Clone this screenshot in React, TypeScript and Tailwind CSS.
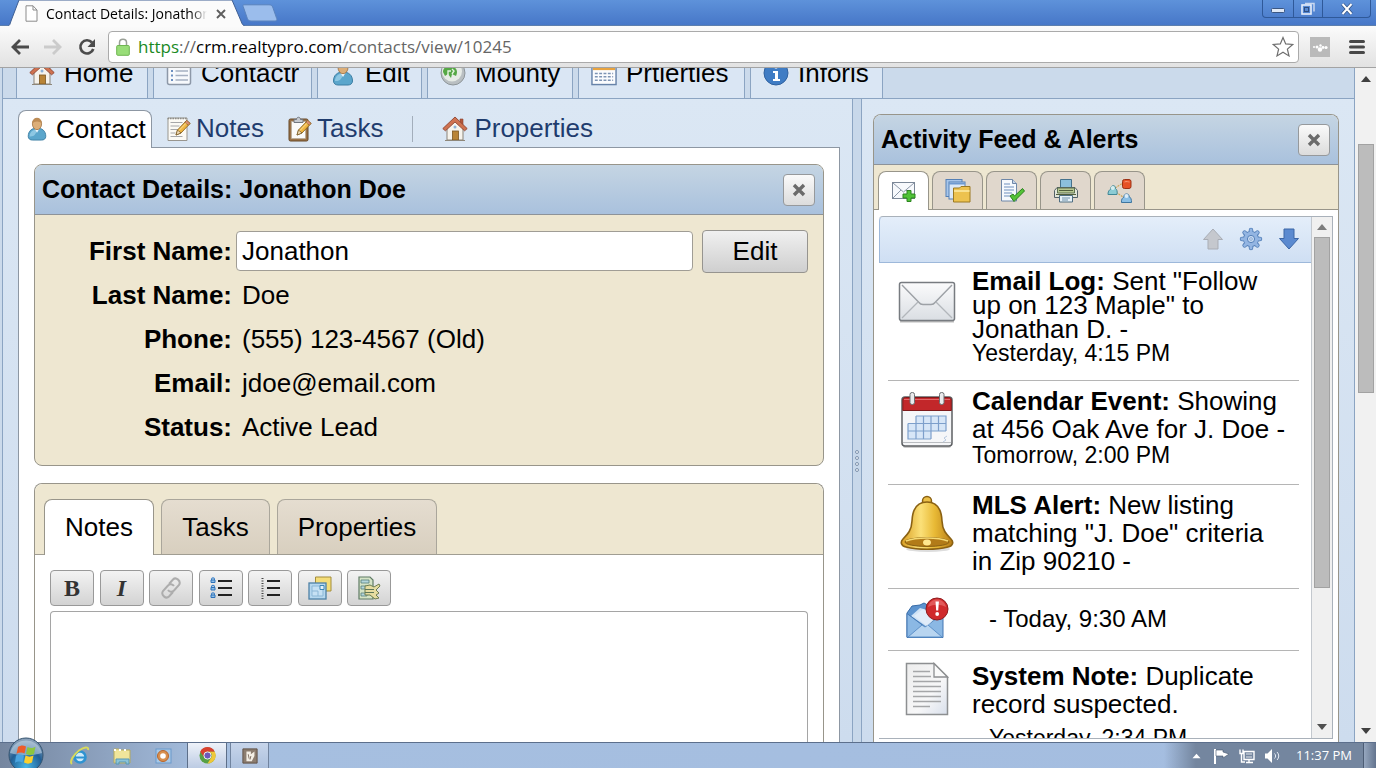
import React, { useState } from "react";
import clsx from "clsx";

interface IconProps {
  className?: string;
}

/* ---------- Icons ---------- */

const HouseIcon: React.FC<IconProps> = ({ className }) => (
  <svg viewBox="0 0 26 26" className={className} aria-hidden="true">
    <path d="M5 12v12h16V12l-8-8z" fill="#f6f3ec" stroke="#8b8378" />
    <path d="M18 3h3v6l-3-3z" fill="#b5583c" stroke="#8a4330" strokeWidth=".6" />
    <path d="M13 1 .8 12.6l2.6 2.2L13 6l9.600 8.800 2.600-2.200z" fill="#cf7250" stroke="#8f4632" strokeWidth=".9" />
    <rect x="10.500" y="15" width="6" height="9" fill="#b98436" stroke="#7b5622" strokeWidth=".8" />
    <circle cx="13" cy="11" r="1.500" fill="#8bb0d8" />
    <path d="M3 24.500h20" stroke="#8e8779" />
  </svg>
);

const PersonIcon: React.FC<IconProps> = ({ className }) => (
  <svg viewBox="0 0 22 26" className={className} aria-hidden="true">
    <path d="M1.500 21c0-6 4-9 9.500-9s9.500 3 9.500 9c0 2.500-2 4-4.500 4H6c-2.500 0-4.500-1.500-4.500-4z" fill="#5ba6cc" stroke="#3d7fa4" />
    <path d="M3 21c0-5 3.500-7.500 8-7.500-1 5-3 8-8 7.500z" fill="#a3d5ec" opacity=".7" />
    <path d="M8 12h6l-3 5z" fill="#eef6fb" />
    <ellipse cx="11" cy="7.500" rx="5" ry="6.200" fill="#dcae78" stroke="#9a6b3a" strokeWidth=".8" />
    <path d="M5.800 7c0-4 2-6 5.200-6s5.200 2 5.200 6c-2-3-8-3-10.400 0z" fill="#bd8c55" />
  </svg>
);

const ListIcon: React.FC<IconProps> = ({ className }) => (
  <svg viewBox="0 0 26 26" className={className} aria-hidden="true">
    <rect x="1.500" y="1.500" width="23" height="23" rx="2" fill="#f7f9fc" stroke="#8d98a8" strokeWidth="1.500" />
    <path d="M5 6.500h2M5 11h2M5 15.500h2M5 20h2" stroke="#6c8fc0" strokeWidth="2" />
    <path d="M9.500 6.500H22M9.500 11H22M9.500 15.500H22M9.500 20H22" stroke="#a5b0c1" strokeWidth="1.300" />
  </svg>
);

const GlobeIcon: React.FC<IconProps> = ({ className }) => (
  <svg viewBox="0 0 26 26" className={className} aria-hidden="true">
    <circle cx="13" cy="13" r="12" fill="#b9bfc2" stroke="#8d9599" />
    <circle cx="12" cy="11.500" r="10" fill="#e6ebe6" />
    <path d="M3 12c0-5 5-7 10-5 4 1 5 5 3 9l-4-2-1 4-3-4-3 2z" fill="#55a845" />
    <path d="M8 15v-4h3M12 9l2 2-2 3" fill="none" stroke="#e3f3dd" strokeWidth="1.400" />
  </svg>
);

const CalendarGridIcon: React.FC<IconProps> = ({ className }) => (
  <svg viewBox="0 0 27 26" className={className} aria-hidden="true">
    <rect x="1" y="1" width="25" height="24" fill="#fbfcfe" stroke="#6783a9" strokeWidth="1.500" />
    <rect x="2" y="5" width="23" height="5" fill="#e8a33f" />
    <path d="M4 13.500h19M4 17h19M4 20.500h19" stroke="#7d93b3" strokeWidth="1.600" strokeDasharray="3 1.500" />
  </svg>
);

const InfoIcon: React.FC<IconProps> = ({ className }) => (
  <svg viewBox="0 0 26 26" className={className} aria-hidden="true">
    <circle cx="13" cy="13" r="12" fill="#3f7cc4" stroke="#2f619f" />
    <circle cx="13" cy="6.500" r="2" fill="#fff" />
    <path d="M10 11h5v8h2v2h-7v-2h2v-6h-2z" fill="#fff" />
  </svg>
);

const Pencil = () => (
  <g>
    <path d="m9.500 19 1.500-5L20 4.500l3.500 3L14.500 17z" fill="#f0b640" stroke="#8a6423" strokeWidth=".9" />
    <path d="m18.300 6.200 3.500 3.100 1.900-2-3.500-3z" fill="#d98a70" stroke="#8a6423" strokeWidth=".7" />
    <path d="m9.500 19 1.500-5 3.500 3z" fill="#f3dfb9" stroke="#6d5020" strokeWidth=".7" />
    <path d="m12.500 14.500 7-7.200" stroke="#fae19b" strokeWidth="1" />
  </g>
);

const NoteIcon: React.FC<IconProps> = ({ className }) => (
  <svg viewBox="0 0 25 26" className={className} aria-hidden="true">
    <path d="M1.500 2h19v22.500h-19z" fill="#fbfaf5" stroke="#99968f" />
    <path d="M4 6.500h12M4 10h9M4 13.500h7M4 17h5M4 20.500h12" stroke="#a6a7a9" />
    <path d="M1 2.500h20" stroke="#8e8c88" strokeWidth="1.500" strokeDasharray="1.500 1" />
    <Pencil />
  </svg>
);

const TaskIcon: React.FC<IconProps> = ({ className }) => (
  <svg viewBox="0 0 25 26" className={className} aria-hidden="true">
    <rect x="1.500" y="3" width="19" height="22" rx="1.500" fill="#9a7248" stroke="#674827" />
    <rect x="4" y="5.500" width="14" height="17" fill="#fbfbfa" stroke="#b5aa9a" strokeWidth=".6" />
    <path d="M6.500 6.500v-3h2.500c0-3 4-3 4 0h2.500v3z" fill="#c6cad0" stroke="#72777e" />
    <Pencil />
  </svg>
);

const CloseIcon: React.FC<IconProps> = ({ className }) => (
  <svg viewBox="0 0 14 14" className={className} aria-hidden="true">
    <path d="m2 2 10 10M12 2 2 12" stroke="#6b6b6b" strokeWidth="3.400" />
  </svg>
);

const MailAddIcon = () => (
  <svg viewBox="0 0 26 26" className="size-[26px]" aria-hidden="true">
    <rect x="1.500" y="4.500" width="22" height="16" fill="#f7f9fc" stroke="#7b8797" />
    <path d="m2 5 10.500 9L23 5M2 20l8-8M23 20l-8-8" fill="none" stroke="#8b97a8" />
    <path d="M16 12.500h4v3.500h4v4h-4v3.500h-4V20h-4v-4h4z" fill="#4fc237" stroke="#2c8420" />
  </svg>
);

const FoldersIcon = () => (
  <svg viewBox="0 0 26 26" className="size-[26px]" aria-hidden="true">
    <rect x="1" y="1.500" width="16" height="17" fill="#a8c6ea" stroke="#5580b5" />
    <rect x="4" y="4" width="16" height="17" fill="#dce9f7" stroke="#5580b5" />
    <path d="M4 5.500h16" stroke="#6e9ad0" strokeWidth="2" />
    <path d="M8.500 10h6l1.500-1.500h9V24h-16.500z" fill="#edc24f" stroke="#9c7a22" />
    <path d="M9 12h15.500v2H9z" fill="#f9e190" />
  </svg>
);

const DocCheckIcon = () => (
  <svg viewBox="0 0 26 26" className="size-[26px]" aria-hidden="true">
    <path d="M2.500 1.500h11l4 4V23h-15z" fill="#f6f9fd" stroke="#6f87a8" />
    <path d="M13.500 1.500v4h4" fill="#c6d4e8" stroke="#6f87a8" />
    <path d="M5 6h6M5 9h10M5 12h10M5 15h8M5 18h6" stroke="#6e8fbd" />
    <path d="m11 18 3-2 1.500 2 8-7.500 2 2.500L15 23.500z" fill="#54c336" stroke="#2b7f1e" />
  </svg>
);

const PrinterIcon = () => (
  <svg viewBox="0 0 26 26" className="size-[26px]" aria-hidden="true">
    <path d="M7.500 1.500h11v8h-11z" fill="#8cc0dc" stroke="#45728c" />
    <path d="m4 9.500-2.500 3v7h23v-7l-2.500-3z" fill="#e2e6d9" stroke="#536067" />
    <path d="M4.500 10h17v5h-17z" fill="#b8c892" stroke="#5e7150" />
    <path d="M3 16.500h20M6 12.500h14" stroke="#53603d" strokeWidth="1.200" />
    <path d="M6.500 17.500h13V24h-13z" fill="#e7f1f8" stroke="#4f6e82" />
    <path d="M9 20h8M9 22h6" stroke="#6f90a8" />
  </svg>
);

const NetworkIcon = () => (
  <svg viewBox="0 0 26 26" className="size-[26px]" aria-hidden="true">
    <path d="m8 10 8-5M9 14l7 5" stroke="#cda75b" strokeWidth="1.200" strokeDasharray="2 1" />
    <rect x="15.500" y="1.500" width="8.500" height="9" rx="2" fill="#e65125" stroke="#9b3216" />
    <path d="M17.500 4c2-1 4 0 5 0" stroke="#f79b78" fill="none" />
    <path d="M1 16.500c0-4 2-5 3-5.500-1-4 5-4.500 4.500-.500 1.500 1 2 3 1.500 6z" fill="#8bcbd4" stroke="#3f8796" />
    <circle cx="5.800" cy="10" r="2" fill="#d7eef0" />
    <path d="M14.500 24.500c-.5-3.500 1.500-5 2.500-5.500-.5-4 5.500-4 5-.5 2 1 2.500 3 2.500 6z" fill="#8bbfe5" stroke="#3e759f" />
    <circle cx="19.500" cy="18" r="2" fill="#dcecf7" />
  </svg>
);

const ArrowIcon: React.FC<{ dir: "up" | "down" }> = ({ dir }) => (
  <svg viewBox="0 0 22 22" className={clsx("size-[22px]", dir === "down" && "rotate-180")} aria-hidden="true">
    <path
      d="M11 1 1.500 11.500H6V21h10v-9.500h4.500z"
      fill={dir === "up" ? "#c5c8ce" : "#5b8ad0"}
      stroke={dir === "up" ? "#a9adb5" : "#3c66a6"}
      strokeLinejoin="round"
    />
  </svg>
);

const GearIcon = () => (
  <svg viewBox="0 0 24 24" className="size-6" aria-hidden="true">
    <g stroke="#5580b9" strokeWidth="4.500" strokeLinecap="round">
      <path d="M12 3v18M3 12h18M5.600 5.600l12.800 12.800M18.400 5.600 5.600 18.400" />
    </g>
    <circle cx="12" cy="12" r="8" fill="#5580b9" />
    <g stroke="#93b5e2" strokeWidth="2.800" strokeLinecap="round">
      <path d="M12 3v18M3 12h18M5.600 5.600l12.800 12.800M18.400 5.600 5.600 18.400" />
    </g>
    <circle cx="12" cy="12" r="7.200" fill="#93b5e2" />
    <circle cx="12" cy="12" r="3.600" fill="#c9dcf3" stroke="#5580b9" />
    <circle cx="12" cy="12" r="1.300" fill="#e8f1fb" stroke="#5580b9" strokeWidth=".6" />
  </svg>
);

const EnvelopeIcon = () => (
  <svg viewBox="0 0 58 42" className="h-[42px] w-[58px]" aria-hidden="true">
    <defs>
      <linearGradient id="env" x1="0" y1="0" x2="0" y2="1">
        <stop offset="0" stopColor="#fbfbfc" />
        <stop offset="1" stopColor="#dadee3" />
      </linearGradient>
    </defs>
    <path d="M2 40.500h54" stroke="#bbb" strokeWidth="2" />
    <rect x="1.500" y="1.500" width="55" height="38" rx="2" fill="url(#env)" stroke="#777b80" strokeWidth="1.500" />
    <path d="m4 4 17 17.500c1 1.500 2 2 4 2h8c2 0 3-.5 4-2L54 4" fill="none" stroke="#9da1a6" strokeWidth="1.400" />
    <path d="m4 37 16-16M54 37 38 21" stroke="#b2b6bb" strokeWidth="1.300" />
  </svg>
);

const CalendarIcon = () => (
  <svg viewBox="0 0 54 58" className="h-[58px] w-[54px]" aria-hidden="true">
    <rect x="3" y="53" width="48" height="4" rx="2" fill="#ccc" />
    <rect x="2" y="6" width="50" height="49" rx="3" fill="#f5f6f8" stroke="#5d6063" strokeWidth="1.500" />
    <path d="M2.800 19.500V9c0-1.500 1-2.500 2.500-2.500h43.500c1.500 0 2.500 1 2.500 2.500v10.500z" fill="#c2272a" stroke="#7e1a1b" />
    <path d="M4 8.500h46" stroke="#e3696a" />
    <path d="M3 51.500h48" stroke="#b9bcc0" />
    <path d="M16 25h30v15H31v8H8V32.500h8z" fill="#d7e6f7" />
    <path d="M16 25h30v15M16 25v23M23.500 25v23M31 25v23M38.500 25v15M46 25v15M8 32.500h38M8 40h38M8 32.500V48h23" fill="none" stroke="#7d9fcb" strokeWidth="1.200" />
    <path d="m47 45-3 2 2 2-3 2" fill="none" stroke="#b9c9df" />
    <rect x="10" y="1.500" width="4.500" height="12" rx="2" fill="#e9eaec" stroke="#6c6f72" />
    <rect x="39.500" y="1.500" width="4.500" height="12" rx="2" fill="#e9eaec" stroke="#6c6f72" />
  </svg>
);

const BellIcon = () => (
  <svg viewBox="0 0 56 60" className="h-[60px] w-14" aria-hidden="true">
    <defs>
      <linearGradient id="bell" x1="0" y1="0" x2="1" y2="0">
        <stop offset="0" stopColor="#d99f24" />
        <stop offset=".38" stopColor="#fbe078" />
        <stop offset=".65" stopColor="#e8b935" />
        <stop offset="1" stopColor="#b77c17" />
      </linearGradient>
    </defs>
    <ellipse cx="29" cy="55" rx="22" ry="3" fill="#ddd" />
    <circle cx="28" cy="7" r="4.500" fill="#ecc048" stroke="#8a6113" strokeWidth="1.500" />
    <path d="M28 8c-11 0-14.500 8-15 19-.4 9-4 13-9 18-3 3-2 7 3 8 12 3 30 3 42 0 5-1 6-5 3-8-5-5-8.600-9-9-18C42.500 16 39 8 28 8z" fill="url(#bell)" stroke="#8a6113" strokeWidth="1.600" />
    <ellipse cx="28" cy="48" rx="22" ry="4.500" fill="#b27b18" stroke="#8a6113" />
    <path d="M7 47c10-4 32-4 42 0" fill="none" stroke="#f5d973" strokeWidth="1.500" />
    <ellipse cx="28" cy="48.500" rx="4" ry="3" fill="#ffe78f" />
  </svg>
);

const MailAlertIcon = () => (
  <svg viewBox="0 0 44 42" className="h-[42px] w-11" aria-hidden="true">
    <path d="M2 16 7 9l8-1 4-2 18 10v24H2z" fill="#5d94cf" stroke="#376ba8" />
    <path d="m6 19 9-8 18 5-11 14z" fill="#cfe2f5" />
    <path d="M2 16.500 20 30l18-13.500V40.500H2z" fill="#8bb8e4" stroke="#4377b3" />
    <path d="m3 40 14-12 3 2 3-2 14 12z" fill="#b8d5f0" stroke="#5f92ca" />
    <path d="m9 19 9-7 8 4 4 6-8 7z" fill="#e3effa" opacity=".8" />
    <circle cx="32" cy="12" r="11" fill="#d02a2c" stroke="#8f1c1e" />
    <path d="M23 10c2-10 16-10 18 0-6-3-12-3-18 0z" fill="#ef7a78" opacity=".6" />
    <path d="M30.500 4.500h3.400l-.7 9h-2z" fill="#fff" />
    <circle cx="32.200" cy="17" r="1.900" fill="#fff" />
  </svg>
);

const DocumentIcon = () => (
  <svg viewBox="0 0 44 54" className="h-[54px] w-11" aria-hidden="true">
    <defs>
      <linearGradient id="doc" x1="0" y1="0" x2="1" y2="1">
        <stop offset="0" stopColor="#ededed" />
        <stop offset=".6" stopColor="#f7f7f8" />
        <stop offset="1" stopColor="#d8dfeb" />
      </linearGradient>
    </defs>
    <path d="M1.500 1.500H29l13.500 13.500v37.500h-41z" fill="url(#doc)" stroke="#8d8f91" strokeWidth="1.500" />
    <path d="M29 1.500V15h13.500z" fill="#fafafa" stroke="#8d8f91" strokeWidth="1.300" />
    <path d="M8 9.500h17M8 14.500h18M8 19.500h28M8 24.500h28M8 29.500h28M8 34.500h28M8 39.500h28M8 44.500h17" stroke="#a5a6a8" strokeWidth="1.500" />
  </svg>
);

/* ---------- Shared pieces ---------- */

const CloseButton: React.FC<{ label: string }> = ({ label }) => (
  <button
    type="button"
    aria-label={label}
    className="flex size-8 shrink-0 items-center justify-center rounded border border-[#96999c] bg-linear-to-b from-[#fafafa] to-[#dcdcdc]"
  >
    <CloseIcon className="size-[14px]" />
  </button>
);

const PanelHeader: React.FC<{ title: string; closeLabel: string }> = ({ title, closeLabel }) => (
  <div className="flex h-[50px] shrink-0 items-center justify-between border-b border-[#8d9399] bg-linear-to-b from-[#c5d5e3] to-[#a9c1dd] pr-2 pl-[7px]">
    <h2 className="text-[25px] font-bold">{title}</h2>
    <CloseButton label={closeLabel} />
  </div>
);

/* ---------- Browser chrome ---------- */

const TitleBar = () => (
  <header className="flex h-[26px] shrink-0 justify-between border-b border-[#5d7fae] bg-linear-to-b from-[#5e92da] to-[#4777c8] pl-2">
    <div className="flex">
      <div className="relative flex h-[27px] w-[238px] items-center pl-[17px] text-sm">
        <svg viewBox="0 0 238 27" preserveAspectRatio="none" className="absolute inset-0 size-full" aria-hidden="true">
          <path d="M-2 27c4-1 4-3 5-6L11 0h213l9 21c1 3 2 5 6 6z" fill="#fbfbfb" stroke="#3f5f93" />
          <path d="M-3 27h244" stroke="#fbfbfb" strokeWidth="2" />
        </svg>
        <svg viewBox="0 0 13 17" className="relative h-[17px] w-[13px]" aria-hidden="true">
          <path d="M1 .8h7l4 4.200v11.200H1z" fill="#fff" stroke="#8b8b8b" />
          <path d="M8 .8V5h4" fill="none" stroke="#8b8b8b" />
        </svg>
        <span className="relative ml-2 w-[161px] overflow-hidden mask-r-from-90% font-['Open_Sans','Noto_Sans',sans-serif] whitespace-nowrap">
          Contact Details: Jonathon
        </span>
        <button type="button" aria-label="Close tab" className="relative ml-[9px]">
          <svg viewBox="0 0 10 10" className="size-[10px]" aria-hidden="true">
            <path d="m1 1 8 8M9 1 1 9" stroke="#5e5e5e" strokeWidth="1.900" />
          </svg>
        </button>
      </div>
      <button type="button" aria-label="New tab" className="-ml-1 self-start pt-1">
        <svg viewBox="0 0 36 18" className="h-[18px] w-9" aria-hidden="true">
          <path d="M2 .8h25c2 0 3 .7 3.700 2.200l4 11.500c.5 1.500 0 2.500-1.700 2.500H9c-2 0-3-1-3.700-2.700L1.200 2.500C.8 1.300 1 .8 2 .8z" fill="#9bbdec" stroke="#5a83bd" />
        </svg>
      </button>
    </div>
    <div className="mr-[5px] flex h-[18px] rounded-b border border-t-0 border-[#2f5999]">
      <button type="button" aria-label="Minimize" className="flex w-[30px] items-center justify-center">
        <svg viewBox="0 0 14 5" className="mt-1 h-[5px] w-[14px]" aria-hidden="true">
          <rect x=".5" y=".5" width="13" height="4" rx="1" fill="#dfe9f7" stroke="#3b5783" />
        </svg>
      </button>
      <button type="button" aria-label="Restore" className="flex w-[30px] items-center justify-center border-x border-[#2f5999]">
        <svg viewBox="0 0 16 14" className="h-[14px] w-4" aria-hidden="true">
          <path d="M5 1.500h9v8" fill="none" stroke="#c9d8f0" strokeWidth="1.500" />
          <rect x="2" y="3" width="9" height="9" fill="none" stroke="#e8effa" strokeWidth="1.600" />
          <rect x="4.500" y="5.500" width="4" height="4" fill="none" stroke="#2f4f80" />
        </svg>
      </button>
      <button type="button" aria-label="Close window" className="flex w-[47px] items-center justify-center">
        <svg viewBox="0 0 12 12" className="size-3" aria-hidden="true">
          <path d="m1.500 1 9 10M10.500 1l-9 10" stroke="#2f4f80" strokeWidth="3.400" />
          <path d="m1.500 1 9 10M10.500 1l-9 10" stroke="#fff" strokeWidth="2" />
        </svg>
      </button>
    </div>
  </header>
);

const AddressBar = () => (
  <div className="flex h-[42px] shrink-0 items-center border-b border-[#a3a3a3] bg-linear-to-b from-[#fbfbfb] to-[#e2e2e2] pr-[11px] pl-[11px]">
    <button type="button" aria-label="Back">
      <svg viewBox="0 0 18 16" className="h-4 w-[18px]" aria-hidden="true">
        <path d="M18 8H3M9 1 2 8l7 7" fill="none" stroke="#4b4b4b" strokeWidth="2.800" />
      </svg>
    </button>
    <button type="button" aria-label="Forward" className="ml-[15px]">
      <svg viewBox="0 0 18 16" className="h-4 w-[18px]" aria-hidden="true">
        <path d="M0 8h15M9 1l7 7-7 7" fill="none" stroke="#cbcbcb" strokeWidth="2.800" />
      </svg>
    </button>
    <button type="button" aria-label="Reload" className="ml-4">
      <svg viewBox="0 0 18 18" className="size-[18px]" aria-hidden="true">
        <path d="M14 4.500A6.600 6.600 0 1 0 15.300 11" fill="none" stroke="#4b4b4b" strokeWidth="2.700" />
        <path d="M17 1v8H9.500z" fill="#4b4b4b" />
      </svg>
    </button>
    <div className="ml-3 flex h-8 flex-1 items-center rounded border border-[#aaa] bg-white pr-1 pl-[7px]">
      <svg viewBox="0 0 14 18" className="h-[18px] w-[14px]" aria-hidden="true">
        <path d="M3.500 9V4.500C3.500 0 10.500 0 10.500 4.500V9" fill="none" stroke="#9aa097" strokeWidth="1.500" />
        <rect x=".7" y="7.500" width="12.600" height="9.800" rx="1" fill="#98dd78" stroke="#6fb552" />
      </svg>
      <p className="ml-2 flex-1 font-['Open_Sans','Noto_Sans',sans-serif] text-[17px] whitespace-nowrap text-[#666]">
        <span className="text-[#1a8a1f]">https</span>://<span className="text-black">crm.realtypro.com</span>
        /contacts/view/10245
      </p>
      <button type="button" aria-label="Bookmark this page">
        <svg viewBox="0 0 22 21" className="h-[21px] w-[22px]" aria-hidden="true">
          <path d="m11 1.500 2.700 6.400 7 .6-5.300 4.600 1.600 6.800-6-3.600-6 3.600 1.600-6.800L1.300 8.500l7-.6z" fill="#fff" stroke="#6e6e6e" strokeWidth="1.200" />
        </svg>
      </button>
    </div>
    <button type="button" aria-label="Extension" className="ml-[11px]">
      <svg viewBox="0 0 20 20" className="size-5" aria-hidden="true">
        <path d="M0 0h20v20H0z" fill="#bababa" />
        <g fill="#fff">
          <circle cx="4" cy="10" r="1" />
          <circle cx="7" cy="10" r="1.500" />
          <circle cx="10" cy="12.500" r="2.200" />
          <circle cx="10.500" cy="8.500" r="1.200" />
          <circle cx="13" cy="10.500" r="1.400" />
          <circle cx="16" cy="10.500" r="1.600" />
        </g>
      </svg>
    </button>
    <button type="button" aria-label="Menu" className="ml-[19px]">
      <svg viewBox="0 0 16 16" className="size-4" aria-hidden="true">
        <path d="M1.500 2.500h13M1.500 8h13M1.500 13.500h13" stroke="#474747" strokeWidth="3" strokeLinecap="round" />
      </svg>
    </button>
  </div>
);

/* ---------- Site navigation ---------- */

const navItems = [
  { label: "Home", icon: HouseIcon, width: "w-[132px]" },
  { label: "Contactr", icon: ListIcon, width: "w-[159px]" },
  { label: "Edit", icon: PersonIcon, width: "w-[105px]" },
  { label: "Mounty", icon: GlobeIcon, width: "w-[146px]" },
  { label: "Prtierties", icon: CalendarGridIcon, width: "w-[167px]" },
  { label: "Inforis", icon: InfoIcon, width: "w-[133px]" },
];

const MainNav = () => (
  <nav className="flex h-[31px] shrink-0 items-end gap-[5px] overflow-hidden border-b border-[#8ba4c2] bg-[#cbdaeb] pl-[13px]">
    {navItems.map(({ label, icon: Icon, width }) => {
      const active = label.startsWith("Prt");
      return (
        <a
          key={label}
          href="#"
          className={clsx(
            "flex h-[50px] shrink-0 items-center gap-[9px] border-x border-[#8ba4c2] bg-[#dae6f4] pl-3 text-[26px] leading-[50px]",
            width,
            active && "relative z-10 -mb-px h-[51px] pb-px",
          )}
        >
          <Icon className="size-[26px]" />
          {label}
        </a>
      );
    })}
  </nav>
);

const SubTabs = () => (
  <div className="flex h-[38px] items-center border-b border-[#8d97a3] text-[26px] text-[#1f3c6e]">
    <button
      type="button"
      className="-mb-px flex h-[39px] w-[134px] items-center gap-2 self-start rounded-t-lg border border-b-0 border-[#8d97a3] bg-white pb-[2px] pl-[7px] text-black"
    >
      <PersonIcon className="h-6 w-[22px]" />
      Contact
    </button>
    <button type="button" className="ml-[14px] flex items-center gap-1">
      <NoteIcon className="size-[26px]" />
      Notes
    </button>
    <button type="button" className="ml-[23px] flex items-center gap-1">
      <TaskIcon className="size-[26px]" />
      Tasks
    </button>
    <span className="ml-[29px] h-[26px] w-px bg-[#a3aebb]" />
    <button type="button" className="ml-[29px] flex items-center gap-[6px]">
      <HouseIcon className="size-[26px]" />
      Properties
    </button>
  </div>
);

/* ---------- Contact details ---------- */

const details = [
  { label: "Last Name:", value: "Doe" },
  { label: "Phone:", value: "(555) 123-4567 (Old)" },
  { label: "Email:", value: "jdoe@email.com" },
  { label: "Status:", value: "Active Lead" },
];

const ContactCard = () => {
  const [firstName, setFirstName] = useState("Jonathon");

  return (
    <section className="overflow-hidden rounded-lg border border-[#98958a] bg-[#eee7d1]">
      <PanelHeader title="Contact Details: Jonathon Doe" closeLabel="Close contact details" />
      <div className="pt-[14px] pr-[15px] pb-4 text-[26px]">
        <div className="flex h-11 items-center">
          <label htmlFor="first-name" className="w-[197px] shrink-0 text-right font-bold">
            First Name:
          </label>
          <input
            id="first-name"
            type="text"
            value={firstName}
            onChange={(e) => setFirstName(e.target.value)}
            className="ml-1 h-10 min-w-0 flex-1 rounded border border-[#a09d95] bg-white px-[5px]"
          />
          <button
            type="button"
            className="ml-[9px] h-[43px] w-[106px] rounded border border-[#96948f] bg-linear-to-b from-[#f0f0f0] to-[#cfcfcf]"
          >
            Edit
          </button>
        </div>
        <dl>
          {details.map((d) => (
            <div key={d.label} className="flex h-11 items-center">
              <dt className="w-[197px] shrink-0 text-right font-bold">{d.label}</dt>
              <dd className="ml-[10px]">{d.value}</dd>
            </div>
          ))}
        </dl>
      </div>
    </section>
  );
};

/* ---------- Notes editor ---------- */

const editorTools = [
  {
    label: "Bold",
    icon: <span className="font-['Liberation_Serif',serif] text-2xl font-bold text-[#333]">B</span>,
  },
  {
    label: "Italic",
    icon: <span className="font-['Liberation_Serif',serif] text-2xl font-bold text-[#333] italic">I</span>,
  },
  {
    label: "Insert link",
    icon: (
      <svg viewBox="0 0 22 22" className="size-[22px]" fill="none" stroke="#adadad" strokeWidth="2" aria-hidden="true">
        <path d="m9 7 4-4.500c3-3 8.500 1.500 6 5.500l-5 5.500c-2 2-4.500 1.500-6-.5" />
        <path d="m13 15-4 4.500c-3 3-8.500-1.500-6-5.500l5-5.500c2-2 4.500-1.500 6 .5" />
      </svg>
    ),
  },
  {
    label: "Bulleted list",
    icon: (
      <svg viewBox="0 0 24 24" className="size-6" fill="none" aria-hidden="true">
        <path d="M9 5h14M9 12h14M9 19h14" stroke="#222" strokeWidth="1.800" />
        <path d="M2.500 4c0-3 3-3 3 0M2.500 11.500c0-3 3-3 3 0M2.500 19c0-3 3-3 3 0" stroke="#3a80c8" strokeWidth="1.200" />
        <path d="M2 4h4v2.500H2zM2 11.500h4V14H2zM2 19h4v2.500H2z" fill="#8dbdea" stroke="#2d72b8" />
      </svg>
    ),
  },
  {
    label: "Numbered list",
    icon: (
      <svg viewBox="0 0 24 24" className="size-6" fill="none" aria-hidden="true">
        <path d="M9 5h13M9 12h13M9 19h13" stroke="#222" strokeWidth="1.800" />
        <path d="M4.500 2v21" stroke="#444" strokeWidth="2" strokeDasharray="1 1.500" />
      </svg>
    ),
  },
  {
    label: "Insert image",
    icon: (
      <svg viewBox="0 0 24 24" className="size-6" aria-hidden="true">
        <path d="M7.500 1h15.500v14H7.500z" fill="#f4dd79" stroke="#a38d3b" />
        <rect x="1" y="7" width="17" height="16" fill="#b6d8ef" stroke="#4e81a6" strokeWidth="1.300" />
        <path d="M4 10h11v10H4zM4 15h6v5" fill="#c6e1f4" stroke="#8bb7d6" />
        <path d="M12 9.500h4v4h-4z" fill="#e3f1fa" stroke="#3c86b6" />
      </svg>
    ),
  },
  {
    label: "Edit source",
    icon: (
      <svg viewBox="0 0 24 24" className="size-6" aria-hidden="true">
        <path d="M2 1h11l3 3v19H2z" fill="#d5e3c6" stroke="#5f7b65" strokeWidth="1.200" />
        <path d="M4 4h8v3H4zM4 10h5v3H4zM4 17h6v3H4z" fill="#b4d6dc" stroke="#577f79" strokeWidth=".8" />
        <path d="m8 10 5-1 4 2 5-3 1 2-4 4 3 3-3 2 3 3-4 1-5-4H8z" fill="#e6dca0" stroke="#6c7d50" />
        <path d="M8 13.500h9M8 16.500h9" stroke="#5d7658" />
      </svg>
    ),
  },
];

const editorTabs = [
  { label: "Notes", width: "w-[110px]" },
  { label: "Tasks", width: "w-[109px]" },
  { label: "Properties", width: "w-[160px]" },
];

const EditorCard = () => {
  const [activeTab, setActiveTab] = useState("Notes");

  return (
    <section className="mt-[17px] flex min-h-0 flex-1 flex-col rounded-t-lg border border-b-0 border-[#98958a]">
      <div className="flex h-[71px] shrink-0 items-end gap-[7px] rounded-t-lg border-b border-[#a09d92] bg-[#eee7d1] pl-[9px]">
        {editorTabs.map(({ label, width }) => (
          <button
            key={label}
            type="button"
            onClick={() => setActiveTab(label)}
            className={clsx(
              "rounded-t-lg border border-b-0 text-[26px]",
              width,
              activeTab === label
                ? "-mb-px h-14 border-[#98958a] bg-white pb-px"
                : "h-[55px] border-[#aaa69b] bg-linear-to-b from-[#e5ddd0] to-[#d8cfbf]",
            )}
          >
            {label}
          </button>
        ))}
      </div>
      <div className="flex min-h-0 flex-1 flex-col px-[15px] pt-[15px]">
        <div className="flex w-[341px] shrink-0 justify-between">
          {editorTools.map((tool) => (
            <button
              key={tool.label}
              type="button"
              aria-label={tool.label}
              className="flex h-9 w-11 items-center justify-center rounded border border-[#999] bg-linear-to-b from-[#f3f3f3] to-[#d3d3d3]"
            >
              {tool.icon}
            </button>
          ))}
        </div>
        <textarea
          aria-label="Note text"
          className="mt-[5px] w-full flex-1 resize-none rounded-t border border-b-0 border-[#a5a5a5] bg-white p-2 text-[26px]"
        />
      </div>
    </section>
  );
};

/* ---------- Activity feed ---------- */

const feedTabs = [
  { label: "Email", icon: <MailAddIcon /> },
  { label: "Folders", icon: <FoldersIcon /> },
  { label: "Documents", icon: <DocCheckIcon /> },
  { label: "Print", icon: <PrinterIcon /> },
  { label: "Network", icon: <NetworkIcon /> },
];

interface FeedItemProps {
  icon: React.ReactNode;
  className?: string;
  children: React.ReactNode;
}

const FeedItem: React.FC<FeedItemProps> = ({ icon, className, children }) => (
  <li className={clsx("flex border-b border-[#b5b5b5] text-[26px]", className)}>
    <div className="flex w-[78px] shrink-0 justify-center self-start">{icon}</div>
    <div className="min-w-0 flex-1 pr-3 pl-[6px]">{children}</div>
  </li>
);

const ActivityFeed = () => {
  const [activeTab, setActiveTab] = useState("Email");

  return (
    <section className="flex h-full flex-col overflow-hidden rounded-t-lg border border-b-0 border-[#98958a] bg-white">
      <PanelHeader title="Activity Feed & Alerts" closeLabel="Close activity feed" />
      <div className="flex h-[45px] shrink-0 items-end gap-[3px] border-b border-[#98958a] bg-[#eee7d1] pl-1">
        {feedTabs.map(({ label, icon }) => (
          <button
            key={label}
            type="button"
            aria-label={label}
            onClick={() => setActiveTab(label)}
            className={clsx(
              "flex w-[51px] items-center justify-center rounded-t-lg border border-b-0 border-[#98958a]",
              activeTab === label ? "-mb-px h-[39px] bg-white" : "h-[38px] bg-[#e0d7cc]",
            )}
          >
            {icon}
          </button>
        ))}
      </div>
      <div className="mx-[5px] mt-[6px] mb-[3px] flex min-h-0 flex-1 rounded-tl border-t border-r border-b border-[#a9b1ba]">
        <div className="flex min-w-0 flex-1 flex-col overflow-hidden">
          <div className="flex h-[46px] shrink-0 items-center justify-end gap-[15px] rounded-tl border-b border-l border-[#9db8da] bg-linear-to-b from-[#e4eefa] to-[#cfdff3] pr-[11px] pb-px">
            <button type="button" aria-label="Move up">
              <ArrowIcon dir="up" />
            </button>
            <button type="button" aria-label="Feed settings">
              <GearIcon />
            </button>
            <button type="button" aria-label="Move down">
              <ArrowIcon dir="down" />
            </button>
          </div>
          <ul className="min-h-0 flex-1 overflow-hidden pr-3 pl-[9px]">
            <FeedItem icon={<div className="pt-3"><EnvelopeIcon /></div>} className="pt-[6px] pb-[15px] leading-6">
              <p>
                <b>Email Log:</b> Sent "Follow up on 123 Maple" to Jonathan D. -
              </p>
              <p className="text-[23px] leading-6">Yesterday, 4:15 PM</p>
            </FeedItem>
            <FeedItem icon={<div className="pt-1"><CalendarIcon /></div>} className="pt-[6px] pb-[17px] leading-7">
              <p>
                <b>Calendar Event:</b> Showing at 456 Oak Ave for J. Doe -
              </p>
              <p className="text-[23px] leading-6">Tomorrow, 2:00 PM</p>
            </FeedItem>
            <FeedItem icon={<div className="pt-[3px]"><BellIcon /></div>} className="pt-[6px] pb-[13px] leading-7">
              <p>
                <b>MLS Alert:</b> New listing matching "J. Doe" criteria in Zip 90210 -
              </p>
            </FeedItem>
            <FeedItem icon={<MailAlertIcon />} className="pt-2 pb-[11px] leading-7">
              <p className="pt-2 pl-[17px] text-2xl leading-7">- Today, 9:30 AM</p>
            </FeedItem>
            <FeedItem icon={<DocumentIcon />} className="pt-[11px] leading-7">
              <p>
                <b>System Note:</b> Duplicate record suspected.
              </p>
              <p className="pt-[6px] pl-[17px] text-[23px] leading-7">Yesterday, 2:34 PM</p>
            </FeedItem>
          </ul>
        </div>
        <div className="flex w-[21px] shrink-0 flex-col items-center border-l border-[#c3c8ce] bg-[#f0f0f0]">
          <svg viewBox="0 0 10 6" className="my-[7px] h-[6px] w-[10px]" aria-hidden="true">
            <path d="m5 0 5 6H0z" fill="#7c7c7c" />
          </svg>
          <div className="h-[351px] w-4 border border-[#a2a2a2] bg-[#bcbcbc]" />
          <svg viewBox="0 0 10 6" className="mt-auto mb-2 h-[6px] w-[10px]" aria-hidden="true">
            <path d="m5 6 5-6H0z" fill="#505050" />
          </svg>
        </div>
      </div>
    </section>
  );
};

/* ---------- Taskbar ---------- */

const Taskbar = () => (
  <footer className="relative flex h-[26px] shrink-0 items-center border-t border-[#5c6f8c] bg-linear-to-r from-[#75869f] via-[#a6bfe0] via-15% to-[#a4bde0]">
    <button type="button" aria-label="Start" className="-mt-2 ml-2 h-[34px] w-9 overflow-hidden">
      <svg viewBox="0 0 36 34" className="h-[34px] w-9" aria-hidden="true">
        <defs>
          <radialGradient id="orb" cx=".5" cy=".85" r=".8">
            <stop offset="0" stopColor="#45b7e8" />
            <stop offset=".6" stopColor="#215f96" />
            <stop offset="1" stopColor="#8aa1b9" />
          </radialGradient>
        </defs>
        <circle cx="18" cy="20" r="17" fill="url(#orb)" stroke="#34536f" />
        <path d="M2 18a16.500 16.500 0 0 1 32 0c-10 3-22 3-32 0z" fill="#d9e6ef" opacity=".5" />
        <path d="M10 12c3-2 5-2 8-.5l-1.500 7c-3-1.500-5.500-1-8 .3z" fill="#ee5b28" />
        <path d="M19.500 12c3 1.500 5 1.500 8-.3L26 19c-3 1.500-5 1.500-8 0z" fill="#8cc63f" />
        <path d="M8 20.500c3-1.500 5-1.500 8 0l-1.500 7c-3-1.500-5-1-7.500.3z" fill="#4aa4e0" />
        <path d="M17.500 20.500c3 1.500 5 1.500 8 0l-1.500 7c-3 1.500-5 1.500-8 0z" fill="#fbd02e" />
      </svg>
    </button>
    <button type="button" aria-label="Internet Explorer" className="ml-[25px]">
      <svg viewBox="0 0 22 22" className="size-[22px]" aria-hidden="true">
        <circle cx="11" cy="12" r="5.500" fill="#cdeafa" stroke="#2f93d1" strokeWidth="2.600" />
        <path d="M6 12.500h10" stroke="#2f93d1" strokeWidth="2" />
        <path d="M3 19C0 17 5 9 10 5.500 15 2 20 1 19 5" fill="none" stroke="#d8d95c" strokeWidth="2" />
      </svg>
    </button>
    <button type="button" aria-label="File Explorer" className="ml-5">
      <svg viewBox="0 0 22 20" className="h-5 w-[22px]" aria-hidden="true">
        <path d="M3 3h5l1 1h10v13H3z" fill="#f0e59b" stroke="#b4a95f" />
        <path d="M4 3v2M9 3v2M14 3v2" stroke="#fff" strokeWidth="2" />
        <path d="M5 18v-5h13v5h-3v-2H8v2z" fill="#8bc4d9" stroke="#5897b3" />
      </svg>
    </button>
    <button type="button" aria-label="Media Player" className="ml-5">
      <svg viewBox="0 0 20 18" className="h-[18px] w-5" aria-hidden="true">
        <rect x="3" y="2" width="15" height="14" fill="#a9c8e6" stroke="#6a9acb" />
        <circle cx="10" cy="9" r="5.500" fill="#d8904f" stroke="#b9652b" />
        <circle cx="10" cy="9" r="2.800" fill="#fff" />
      </svg>
    </button>
    <button
      type="button"
      aria-label="Chrome"
      className="ml-[14px] flex h-full w-10 items-center justify-center border-x border-[#5d6f89] bg-linear-to-b from-[#eef2f9] to-[#bccbe3]"
    >
      <svg viewBox="0 0 18 18" className="size-[17px]" aria-hidden="true">
        <circle cx="9" cy="9" r="8.500" fill="#57a044" />
        <path d="M1.300 5A8.500 8.500 0 0 1 16.700 5H9a4 4 0 0 0-3.500 6z" fill="#d8412f" />
        <path d="M16.700 5A8.500 8.500 0 0 1 9 17.500l4-6.500A4 4 0 0 0 9 5z" fill="#f0c739" />
        <circle cx="9" cy="9" r="3.800" fill="#6c58b9" stroke="#f5f5f5" />
      </svg>
    </button>
    <button
      type="button"
      aria-label="Paint"
      className="ml-[3px] flex h-full w-[39px] items-center justify-center border-x border-[#71849f] bg-linear-to-b from-[#c7d5ea] to-[#adc1de]"
    >
      <svg viewBox="0 0 18 18" className="size-4" aria-hidden="true">
        <path d="M1 1h16v16H1z" fill="#8c7d70" stroke="#5b4b40" />
        <path d="M5 4h5v3l4-3v5l-3 6H5z" fill="#f4efe6" />
        <path d="m7 7 1 5M10 9l-1 4" stroke="#79685b" />
      </svg>
    </button>
    <div className="ml-auto flex h-full items-center bg-linear-to-r from-transparent to-[#74869f] to-15% pl-7 text-white">
      <button type="button" aria-label="Show hidden icons">
        <svg viewBox="0 0 10 6" className="h-[6px] w-[9px]" aria-hidden="true">
          <path d="m5 .5 4.500 5H.5z" fill="#fff" />
        </svg>
      </button>
      <svg viewBox="0 0 18 16" className="ml-3 h-4 w-[18px]" aria-hidden="true">
        <path d="M2 1v15" stroke="#fff" strokeWidth="2" />
        <path d="M3 2h7v2l6 2-6 4V8H3z" fill="#fff" stroke="#44546b" strokeWidth=".6" />
      </svg>
      <svg viewBox="0 0 16 16" className="ml-2 size-4" fill="none" stroke="#fff" strokeWidth="1.400" aria-hidden="true">
        <path d="M5 3.500h10v8H5zM7 14.500h7M10 11.500v3M1 1.500v4h3v-4M2.500 6v8H6" />
        <path d="M7 6h6M7 9h6" strokeWidth=".8" />
      </svg>
      <svg viewBox="0 0 16 16" className="ml-[9px] size-4" aria-hidden="true">
        <path d="M1 5.500h2.500L8 1v14L3.500 10.500H1z" fill="#fff" />
        <path d="M10.500 5.500c1.500 1.500 1.500 3.500 0 5M13 4c2.300 2.500 2.300 5.500 0 8" fill="none" stroke="#e7edf6" />
      </svg>
      <span className="ml-4 font-['Open_Sans','Noto_Sans',sans-serif] text-[13px]">11:37 PM</span>
      <button
        type="button"
        aria-label="Show desktop"
        className="ml-[11px] h-full w-[13px] border-l border-[#4d5d75] bg-linear-to-r from-[#96a7bf] to-[#63748e]"
      />
    </div>
  </footer>
);

/* ---------- App ---------- */

const App: React.FC = () => {
  return (
    <div className="flex h-screen flex-col overflow-hidden bg-white font-['Liberation_Sans',Arial,sans-serif] text-black">
      <TitleBar />
      <AddressBar />

      <div className="flex min-h-0 flex-1 bg-[#cbdaeb]">
        <div className="ml-[2px] flex min-w-0 flex-1 flex-col border-l border-[#8ba4c2] bg-[#d9e5f2]">
          <MainNav />
          <div className="grid min-h-0 flex-1 grid-cols-[minmax(0,1fr)_10px_492px]">
            <main className="flex min-h-0 flex-col bg-linear-to-b from-[#dbe7f4] to-[#cddcee] pt-[11px] pr-3 pl-[15px]">
              <SubTabs />
              <div className="flex min-h-0 flex-1 flex-col border-x border-[#8d97a3] bg-white px-[15px] pt-4">
                <ContactCard />
                <EditorCard />
              </div>
            </main>

            {/* Splitter */}
            <div className="flex items-center justify-center border-x border-[#8ba4c2] bg-[#c8d8ea]">
              <svg viewBox="0 0 6 24" className="mt-20 h-6 w-[6px]" fill="#eef3f9" stroke="#7e93ad" aria-hidden="true">
                <circle cx="3" cy="3" r="1.500" />
                <circle cx="3" cy="9" r="1.500" />
                <circle cx="3" cy="15" r="1.500" />
                <circle cx="3" cy="21" r="1.500" />
              </svg>
            </div>

            <aside className="min-h-0 bg-linear-to-b from-[#dbe7f4] to-[#cddcee] pt-[15px] pr-[15px] pl-[11px]">
              <ActivityFeed />
            </aside>
          </div>
        </div>

        {/* Page scrollbar */}
        <div className="flex w-[22px] shrink-0 flex-col items-center border-l border-[#8ba4c2] bg-[#f1f1f1]">
          <svg viewBox="0 0 10 6" className="mt-2 h-[6px] w-[10px]" aria-hidden="true">
            <path d="m5 0 5 6H0z" fill="#404040" />
          </svg>
          <div className="mt-[62px] h-[249px] w-4 border border-[#a2a2a2] bg-[#bcbcbc]" />
          <svg viewBox="0 0 10 6" className="mt-auto mb-2 h-[6px] w-[10px]" aria-hidden="true">
            <path d="m5 6 5-6H0z" fill="#404040" />
          </svg>
        </div>
      </div>

      <Taskbar />
    </div>
  );
};

export default App;
